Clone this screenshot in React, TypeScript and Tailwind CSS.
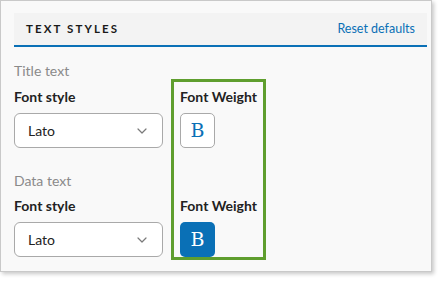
import React from "react";

function Chevron() {
  return (
    <svg width="10" height="6" viewBox="0 0 10 6" fill="none">
      <path d="M1 1 L5 5 L9 1" stroke="#7a7a7a" strokeWidth="1.2" strokeLinecap="round" strokeLinejoin="round" />
    </svg>
  );
}

function FontSelect({ value }: { value: string }) {
  return (
    <div className="flex h-[35px] w-[149px] items-center justify-between rounded-[6px] border border-[#a9a9a9] bg-white pl-[13px] pr-[15px] text-[14px] text-[#222]">
      <span>{value}</span>
      <Chevron />
    </div>
  );
}

function BoldToggle({ active }: { active: boolean }) {
  return (
    <div
      className={
        active
          ? "flex h-[35px] w-[35px] items-center justify-center rounded-[5px] bg-[#0a70b6] text-white"
          : "flex h-[35px] w-[35px] items-center justify-center rounded-[5px] border border-[#a9a9a9] bg-white text-[#0a70b6]"
      }
    >
      <span className="font-['DejaVu_Serif',serif] text-[19px] leading-none font-normal">B</span>
    </div>
  );
}

export default function App() {
  return (
    <div className="h-[283px] w-[441px] bg-white font-['Lato',sans-serif]">
      <div className="h-[272px] w-[432px] border border-[#c9c9c9] bg-[#f9f9f9] pl-[13px] pr-[4px] pt-[12px] shadow-[2px_2px_4px_rgba(0,0,0,0.22)]">
        {/* Header */}
        <div className="flex h-[34px] items-center justify-between border-b-2 border-[#0a70b6] bg-[#f3f3f3] pl-[12px] pr-[12px]">
          <span className="text-[11.5px] font-bold tracking-[2.1px] text-[#1a1a1a]">TEXT STYLES</span>
          <span className="text-[12.5px] text-[#0a70b6]">Reset defaults</span>
        </div>

        <div className="mt-[16px] flex gap-[8px]">
          {/* Left column */}
          <div className="flex flex-col">
            <div className="h-[16px] text-[14px] leading-[16px] text-[#8a8a8a]">Title text</div>
            <div className="mt-[10px] h-[16px] text-[14px] font-bold leading-[16px] text-[#222]">Font style</div>
            <div className="mt-[8px]">
              <FontSelect value="Lato" />
            </div>
            <div className="mt-[25px] h-[16px] text-[14px] leading-[16px] text-[#8a8a8a]">Data text</div>
            <div className="mt-[9px] h-[16px] text-[14px] font-bold leading-[16px] text-[#222]">Font style</div>
            <div className="mt-[8px]">
              <FontSelect value="Lato" />
            </div>
          </div>

          {/* Font weight column */}
          <div className="mt-[16px] flex h-[181px] w-[95px] flex-col border-[3px] border-[#5f9e2e] pl-[6px] pt-[7px]">
            <div className="h-[16px] text-[14px] font-bold leading-[16px] text-[#222]">Font Weight</div>
            <div className="mt-[8px]">
              <BoldToggle active={false} />
            </div>
            <div className="mt-[50px] h-[16px] text-[14px] font-bold leading-[16px] text-[#222]">Font Weight</div>
            <div className="mt-[8px]">
              <BoldToggle active={true} />
            </div>
          </div>
        </div>
      </div>
    </div>
  );
}
